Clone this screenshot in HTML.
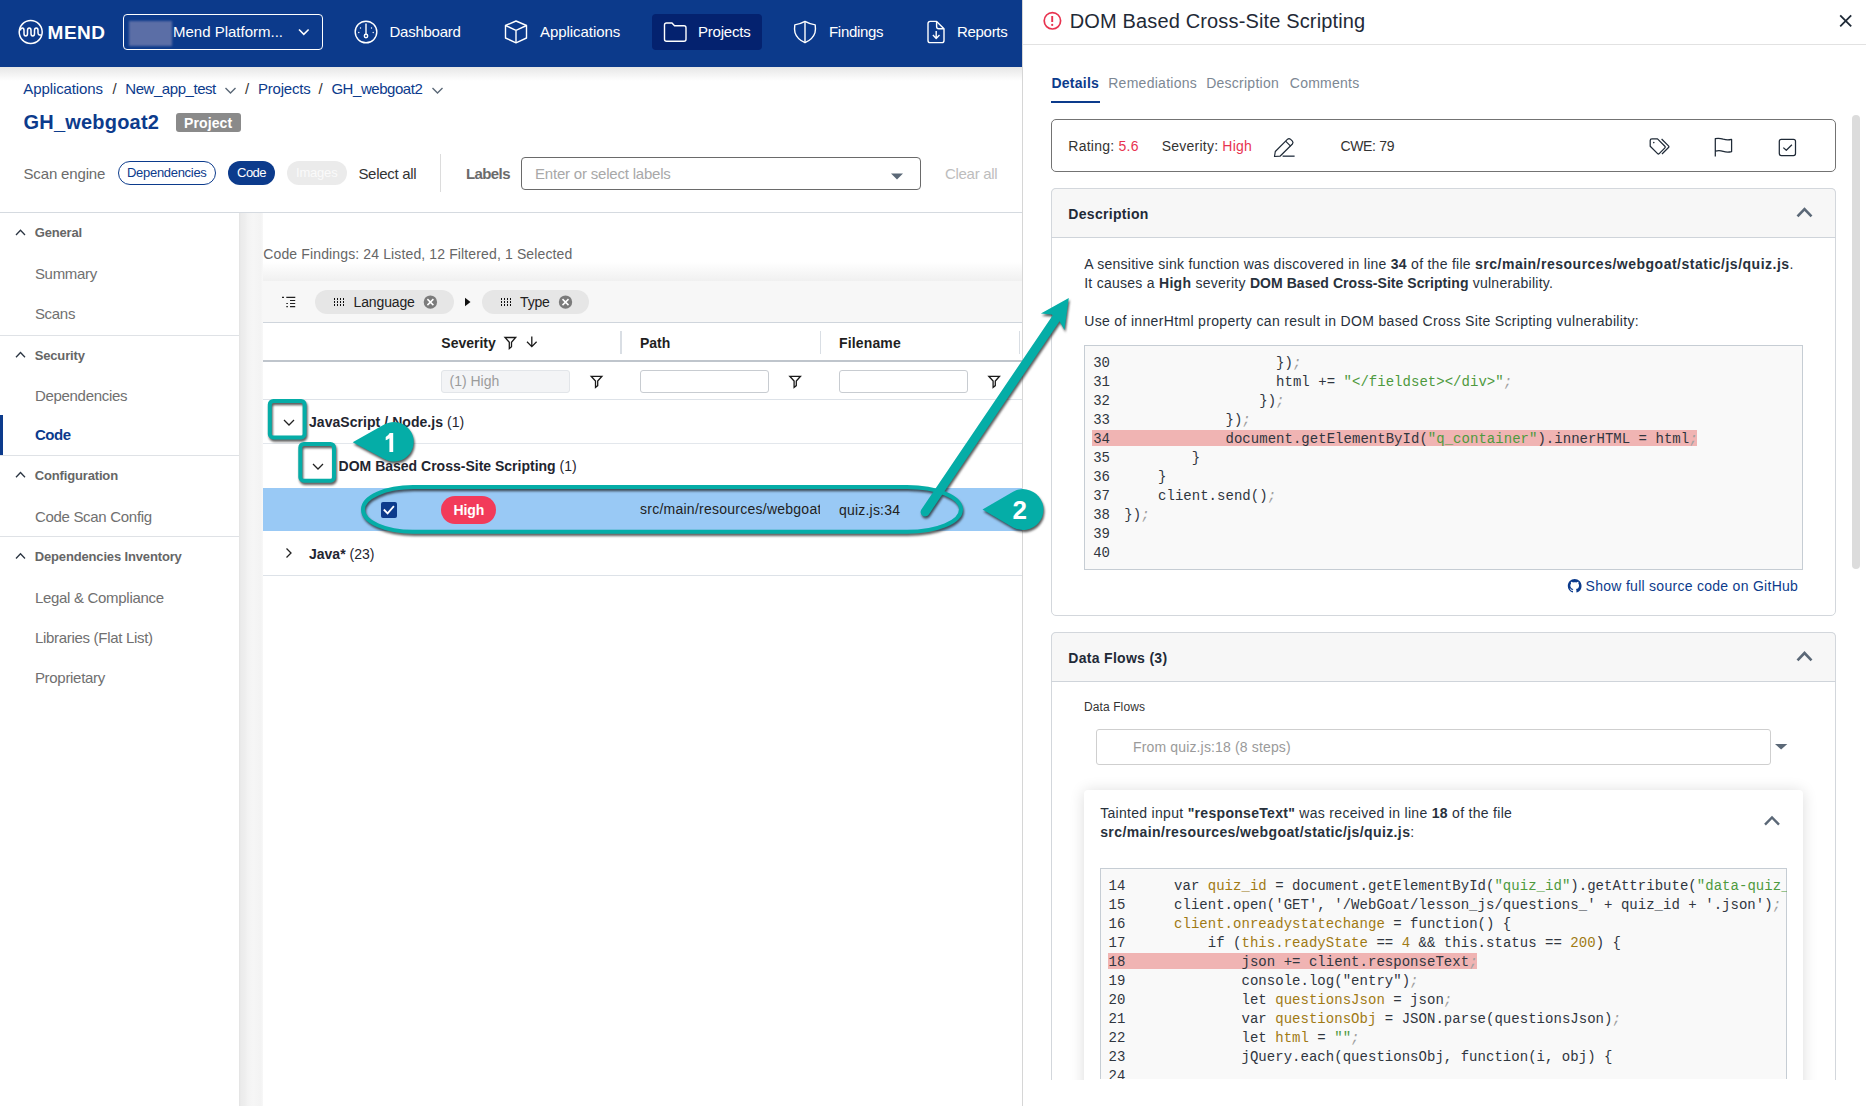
<!DOCTYPE html>
<html><head><meta charset="utf-8">
<style>
*{box-sizing:border-box;margin:0;padding:0}
html,body{width:1866px;height:1106px;overflow:hidden;background:#fff;font-family:"Liberation Sans",sans-serif;color:#333}
.a{position:absolute}
.t{position:absolute;white-space:nowrap;line-height:1}
svg{position:absolute;overflow:visible}
.m{font-family:"Liberation Mono",monospace}
</style></head><body>
<div class="a" style="left:0px;top:0px;width:1022.00px;height:67.00px;background:#0c3a8b"></div>
<div class="a" style="left:0px;top:67px;width:1022.00px;height:14.00px;background:linear-gradient(#e6e6e6,#fff)"></div>
<svg style="left:0;top:0" width="1" height="1" viewBox="0 0 1 1"><g fill="none" stroke="#fff" stroke-width="1.5"><circle cx="30.7" cy="32" r="11.5"/><path d="M20.4 30.5Q20.6 28 22.3 28Q24 28 24 30.5V33.5Q24 36 25.8 36Q27.5 36 27.5 33.5V30.5Q27.5 28 29.3 28Q31 28 31 30.5V33.5Q31 36 32.8 36Q34.5 36 34.5 33.5V30.5Q34.5 28 36.3 28Q38 28 38 30.5V33Q38.3 35.5 41.3 35"/></g></svg>
<div class="t" style="left:47.5px;top:22.52px;font-size:19px;color:#fff;font-weight:bold;letter-spacing:0.55px">MEND</div>
<div class="a" style="left:123px;top:14px;width:200.00px;height:36.00px;border:1.5px solid #fff;border-radius:4px"></div>
<div class="a" style="left:129px;top:21px;width:43.00px;height:25.00px;background:#5b6ea6;filter:blur(1.2px)"></div>
<div class="t" style="left:173px;top:23.50px;font-size:15px;color:#fff;font-weight:normal;">Mend Platform...</div>
<svg style="left:0;top:0" width="1" height="1"><path d="M299 29.5l4.8 4.8 4.8-4.8" fill="none" stroke="#fff" stroke-width="1.6"/></svg>
<svg style="left:0;top:0" width="1" height="1"><g fill="none" stroke="#fff" stroke-width="1.4"><circle cx="366" cy="32" r="10.8"/><path d="M366 23.5v11"/><circle cx="366" cy="36" r="1.7"/></g><g fill="#fff"><circle cx="360.5" cy="28" r=".7"/><circle cx="371.5" cy="28" r=".7"/><circle cx="358.8" cy="32.5" r=".7"/><circle cx="373.2" cy="32.5" r=".7"/></g></svg>
<div class="t" style="left:389.5px;top:23.50px;font-size:15px;color:#fff;font-weight:normal;letter-spacing:-0.25px">Dashboard</div>
<svg style="left:0;top:0" width="1" height="1"><g fill="none" stroke="#fff" stroke-width="1.4" stroke-linejoin="round"><path d="M516 21l10.5 4.5v12.5l-10.5 4.8-10.5-4.8v-12.5z"/><path d="M505.5 25.5l10.5 4.8 10.5-4.8M516 30.3v12.5"/></g></svg>
<div class="t" style="left:540px;top:23.50px;font-size:15px;color:#fff;font-weight:normal;letter-spacing:-0.05px">Applications</div>
<div class="a" style="left:652px;top:14px;width:110.00px;height:36.00px;background:#04226f;border-radius:4px"></div>
<svg style="left:0;top:0" width="1" height="1"><path d="M664.5 25q0-2 2-2h5.5l2.5 2.8h9.5q2 0 2 2v11.5q0 2-2 2h-17.5q-2 0-2-2z" fill="none" stroke="#fff" stroke-width="1.4" stroke-linejoin="round"/></svg>
<div class="t" style="left:698px;top:23.50px;font-size:15px;color:#fff;font-weight:normal;letter-spacing:-0.2px">Projects</div>
<svg style="left:0;top:0" width="1" height="1"><g fill="none" stroke="#fff" stroke-width="1.4" stroke-linejoin="round"><path d="M805 21.4Q810 24.2 815.2 24.9Q815.8 29 815 32.6Q813 39.2 805 42.7Q797 39.2 795 32.6Q794.2 29 794.8 24.9Q800 24.2 805 21.4Z"/><path d="M805 21.4V42.7"/></g></svg>
<div class="t" style="left:829px;top:23.50px;font-size:15px;color:#fff;font-weight:normal;letter-spacing:-0.3px">Findings</div>
<svg style="left:0;top:0" width="1" height="1"><g fill="none" stroke="#fff" stroke-width="1.4" stroke-linejoin="round"><path d="M930.2 21.4H936.6L944 28.8V40.4Q944 42.6 941.8 42.6H930.2Q928 42.6 928 40.4V23.6Q928 21.4 930.2 21.4Z"/><path d="M936.6 21.4V26.6Q936.6 28.8 938.8 28.8H944M936.2 31V38.4M932.9 35.1L936.2 38.4L939.5 35.1"/></g></svg>
<div class="t" style="left:957px;top:23.50px;font-size:15px;color:#fff;font-weight:normal;letter-spacing:-0.3px">Reports</div>
<div class="t" style="left:23.3px;top:81.40px;font-size:15px;color:#0c3b8c;font-weight:normal;letter-spacing:-0.1px">Applications</div>
<div class="t" style="left:112.5px;top:81.40px;font-size:15px;color:#333;font-weight:normal;">/</div>
<div class="t" style="left:125.3px;top:81.40px;font-size:15px;color:#0c3b8c;font-weight:normal;letter-spacing:-0.45px">New_app_test</div>
<svg style="left:0;top:0" width="1" height="1"><path d="M225.5 88l5.0 5 5.0 -5" fill="none" stroke="#5b6877" stroke-width="1.4"/></svg>
<div class="t" style="left:245px;top:81.40px;font-size:15px;color:#333;font-weight:normal;">/</div>
<div class="t" style="left:257.9px;top:81.40px;font-size:15px;color:#0c3b8c;font-weight:normal;letter-spacing:-0.2px">Projects</div>
<div class="t" style="left:318.4px;top:81.40px;font-size:15px;color:#333;font-weight:normal;">/</div>
<div class="t" style="left:331.4px;top:81.40px;font-size:15px;color:#0c3b8c;font-weight:normal;letter-spacing:-0.45px">GH_webgoat2</div>
<svg style="left:0;top:0" width="1" height="1"><path d="M432.5 88l5.0 5 5.0 -5" fill="none" stroke="#5b6877" stroke-width="1.4"/></svg>
<div class="t" style="left:23.5px;top:112.07px;font-size:20px;color:#0c3b8c;font-weight:bold;letter-spacing:0.2px">GH_webgoat2</div>
<div class="a" style="left:176px;top:113px;width:65.00px;height:18.50px;background:#8a8a8a;border-radius:3px"></div>
<div class="t" style="left:184px;top:116.05px;font-size:14px;color:#fff;font-weight:bold;letter-spacing:0.1px">Project</div>
<div class="t" style="left:23.5px;top:166.00px;font-size:15px;color:#6b6b6b;font-weight:normal;letter-spacing:-0.15px">Scan engine</div>
<div class="a" style="left:118px;top:161px;width:98.00px;height:24.00px;border:1.5px solid #0c3b8c;border-radius:12px"></div>
<div class="t" style="left:127px;top:166.30px;font-size:13px;color:#0c3b8c;font-weight:normal;letter-spacing:-0.3px">Dependencies</div>
<div class="a" style="left:228px;top:161px;width:47.00px;height:24.00px;background:#0c3b8c;border-radius:12px"></div>
<div class="t" style="left:237px;top:166.30px;font-size:13px;color:#fff;font-weight:normal;letter-spacing:-0.5px">Code</div>
<div class="a" style="left:287px;top:161px;width:60.00px;height:24.00px;background:#ebebeb;border-radius:12px"></div>
<div class="t" style="left:296px;top:166.30px;font-size:13px;color:#fafafa;font-weight:normal;letter-spacing:-0.2px">Images</div>
<div class="t" style="left:358.4px;top:166.00px;font-size:15px;color:#333;font-weight:normal;letter-spacing:-0.3px">Select all</div>
<div class="a" style="left:440px;top:154px;width:1.00px;height:38.00px;background:#dcdcdc"></div>
<div class="t" style="left:466px;top:166.00px;font-size:15px;color:#6b6b6b;font-weight:bold;letter-spacing:-0.6px">Labels</div>
<div class="a" style="left:521px;top:156.5px;width:400.00px;height:33.00px;border:1.5px solid #6a6a6a;border-radius:4px"></div>
<div class="t" style="left:535px;top:166.00px;font-size:15px;color:#a8a8a8;font-weight:normal;letter-spacing:-0.2px">Enter or select labels</div>
<svg style="left:0;top:0" width="1" height="1"><path d="M891 173.5h12l-6 6z" fill="#5b6877"/></svg>
<div class="t" style="left:945px;top:166.00px;font-size:15px;color:#bdbdbd;font-weight:normal;letter-spacing:-0.3px">Clear all</div>
<div class="a" style="left:0px;top:212px;width:1022.00px;height:1.00px;background:#d5dae0"></div>
<div class="a" style="left:239px;top:213px;width:24.00px;height:893.00px;background:linear-gradient(to right,#e3e3e3 0,#ebebeb 2px,#eeeeee 6px,#f3f3f3 9px,#f6f6f6 14px,#f3f3f3 22px,#f8f8f8 24px)"></div>
<svg style="left:0;top:0" width="1" height="1"><path d="M16 235.0l4.5 -4.7 4.5 4.7" fill="none" stroke="#2b3542" stroke-width="1.3"/></svg>
<div class="t" style="left:34.7px;top:226.30px;font-size:13px;color:#666;font-weight:bold;letter-spacing:-0.15px">General</div>
<div class="t" style="left:34.9px;top:266.20px;font-size:15px;color:#707070;font-weight:normal;letter-spacing:-0.3px">Summary</div>
<div class="t" style="left:34.9px;top:306.30px;font-size:15px;color:#707070;font-weight:normal;letter-spacing:-0.3px">Scans</div>
<div class="a" style="left:0px;top:334.5px;width:239.00px;height:1.00px;background:#dfe2e6"></div>
<svg style="left:0;top:0" width="1" height="1"><path d="M16 357.2l4.5 -4.7 4.5 4.7" fill="none" stroke="#2b3542" stroke-width="1.3"/></svg>
<div class="t" style="left:34.7px;top:348.50px;font-size:13px;color:#666;font-weight:bold;letter-spacing:-0.15px">Security</div>
<div class="t" style="left:34.9px;top:387.50px;font-size:15px;color:#707070;font-weight:normal;letter-spacing:-0.3px">Dependencies</div>
<div class="a" style="left:0px;top:415px;width:3.00px;height:40.00px;background:#0c3b8c"></div>
<div class="t" style="left:34.9px;top:427.20px;font-size:15px;color:#0c3b8c;font-weight:bold;letter-spacing:-0.4px">Code</div>
<div class="a" style="left:0px;top:455px;width:239.00px;height:1.00px;background:#dfe2e6"></div>
<svg style="left:0;top:0" width="1" height="1"><path d="M16 477.2l4.5 -4.7 4.5 4.7" fill="none" stroke="#2b3542" stroke-width="1.3"/></svg>
<div class="t" style="left:34.7px;top:468.50px;font-size:13px;color:#666;font-weight:bold;letter-spacing:-0.15px">Configuration</div>
<div class="t" style="left:34.9px;top:508.70px;font-size:15px;color:#707070;font-weight:normal;letter-spacing:-0.3px">Code Scan Config</div>
<div class="a" style="left:0px;top:536px;width:239.00px;height:1.00px;background:#dfe2e6"></div>
<svg style="left:0;top:0" width="1" height="1"><path d="M16 558.5l4.5 -4.7 4.5 4.7" fill="none" stroke="#2b3542" stroke-width="1.3"/></svg>
<div class="t" style="left:34.7px;top:549.80px;font-size:13px;color:#666;font-weight:bold;letter-spacing:-0.15px">Dependencies Inventory</div>
<div class="t" style="left:34.9px;top:589.70px;font-size:15px;color:#707070;font-weight:normal;letter-spacing:-0.3px">Legal &amp; Compliance</div>
<div class="t" style="left:34.9px;top:629.70px;font-size:15px;color:#707070;font-weight:normal;letter-spacing:-0.3px">Libraries (Flat List)</div>
<div class="t" style="left:34.9px;top:669.70px;font-size:15px;color:#707070;font-weight:normal;letter-spacing:-0.3px">Proprietary</div>
<div class="t" style="left:263.3px;top:246.95px;font-size:14px;color:#666;font-weight:normal;letter-spacing:0.13px">Code Findings: 24 Listed, 12 Filtered, 1 Selected</div>
<div class="a" style="left:263px;top:262px;width:759.00px;height:19.00px;background:linear-gradient(#fff,#f0f0f0)"></div>
<div class="a" style="left:263px;top:281px;width:759.00px;height:41.50px;background:#f7f7f7"></div>
<svg style="left:0;top:0" width="1" height="1"><g stroke="#222" stroke-width="1.1"><path d="M282 297.4h2M286.3 297.4h9M290 300.5h5.2M286.3 303.5h1.6M290 303.5h5.2M286.3 306.6h1.6M290 306.6h5.2"/></g></svg>
<div class="a" style="left:315px;top:290px;width:139.00px;height:24.00px;background:#e6e6e6;border-radius:12px"></div>
<svg style="left:0;top:0" width="1" height="1" shape-rendering="crispEdges"><g fill="#111"><rect x="334" y="298" width="1.1" height="2"/><rect x="334" y="301" width="1.1" height="2"/><rect x="334" y="304" width="1.1" height="2"/><rect x="337" y="298" width="1.1" height="2"/><rect x="337" y="301" width="1.1" height="2"/><rect x="337" y="304" width="1.1" height="2"/><rect x="340" y="298" width="1.1" height="2"/><rect x="340" y="301" width="1.1" height="2"/><rect x="340" y="304" width="1.1" height="2"/><rect x="343" y="298" width="1.1" height="2"/><rect x="343" y="301" width="1.1" height="2"/><rect x="343" y="304" width="1.1" height="2"/></g></svg>
<div class="t" style="left:353.6px;top:295.15px;font-size:14px;color:#222;font-weight:normal;letter-spacing:-0.15px">Language</div>
<svg style="left:0;top:0" width="1" height="1"><circle cx="430.4" cy="302.1" r="6.7" fill="#7b7b7b"/><path d="M427.4 299.1l6 6M433.4 299.1l-6 6" stroke="#fff" stroke-width="1.5"/></svg>
<svg style="left:0;top:0" width="1" height="1"><path d="M465 297.8l5.5 4.2-5.5 4.2z" fill="#111"/></svg>
<div class="a" style="left:482px;top:290px;width:107.00px;height:24.00px;background:#e6e6e6;border-radius:12px"></div>
<svg style="left:0;top:0" width="1" height="1" shape-rendering="crispEdges"><g fill="#111"><rect x="501" y="298" width="1.1" height="2"/><rect x="501" y="301" width="1.1" height="2"/><rect x="501" y="304" width="1.1" height="2"/><rect x="504" y="298" width="1.1" height="2"/><rect x="504" y="301" width="1.1" height="2"/><rect x="504" y="304" width="1.1" height="2"/><rect x="507" y="298" width="1.1" height="2"/><rect x="507" y="301" width="1.1" height="2"/><rect x="507" y="304" width="1.1" height="2"/><rect x="510" y="298" width="1.1" height="2"/><rect x="510" y="301" width="1.1" height="2"/><rect x="510" y="304" width="1.1" height="2"/></g></svg>
<div class="t" style="left:520px;top:295.15px;font-size:14px;color:#222;font-weight:normal;letter-spacing:-0.15px">Type</div>
<svg style="left:0;top:0" width="1" height="1"><circle cx="565.5" cy="302.1" r="6.7" fill="#7b7b7b"/><path d="M562.5 299.1l6 6M568.5 299.1l-6 6" stroke="#fff" stroke-width="1.5"/></svg>
<div class="a" style="left:263px;top:322px;width:759.00px;height:1.30px;background:#cfd5dc"></div>
<div class="t" style="left:441.3px;top:336.05px;font-size:14px;color:#1f1f1f;font-weight:bold;letter-spacing:0px">Severity</div>
<svg style="left:0;top:0" width="1" height="1"><path d="M505 337.5h10.7l-4.2 4.8v4.5l-2.2 1.8v-6.3z" fill="none" stroke="#1a1a1a" stroke-width="1.3" stroke-linejoin="miter"/></svg>
<svg style="left:0;top:0" width="1" height="1"><path d="M531.8 336.5v9.8M527 341.8l4.8 4.8 4.8-4.8" fill="none" stroke="#1a1a1a" stroke-width="1.3"/></svg>
<div class="a" style="left:620px;top:331px;width:1.50px;height:22.50px;background:#d9dee4"></div>
<div class="t" style="left:640px;top:336.05px;font-size:14px;color:#1f1f1f;font-weight:bold;">Path</div>
<div class="a" style="left:819.5px;top:331px;width:1.50px;height:22.50px;background:#d9dee4"></div>
<div class="t" style="left:839px;top:336.05px;font-size:14px;color:#1f1f1f;font-weight:bold;letter-spacing:0.15px">Filename</div>
<div class="a" style="left:1018.5px;top:331px;width:1.50px;height:22.50px;background:#d9dee4"></div>
<div class="a" style="left:263px;top:360px;width:759.00px;height:2.00px;background:#bfc5cc"></div>
<div class="a" style="left:441px;top:369.5px;width:129.00px;height:23.00px;background:#f3f4f6;border:1px solid #e2e5e9;border-radius:3px"></div>
<div class="t" style="left:449.5px;top:374.15px;font-size:14px;color:#9b9b9b;font-weight:normal;letter-spacing:0px">(1) High</div>
<svg style="left:0;top:0" width="1" height="1"><path d="M591.2 376.3h10.7l-4.2 4.8v4.5l-2.2 1.8v-6.3z" fill="none" stroke="#1a1a1a" stroke-width="1.3" stroke-linejoin="miter"/></svg>
<div class="a" style="left:640px;top:369.5px;width:128.50px;height:23.00px;background:#fff;border:1px solid #c8ccd1;border-radius:3px"></div>
<svg style="left:0;top:0" width="1" height="1"><path d="M789.8 376.3h10.7l-4.2 4.8v4.5l-2.2 1.8v-6.3z" fill="none" stroke="#1a1a1a" stroke-width="1.3" stroke-linejoin="miter"/></svg>
<div class="a" style="left:839px;top:369.5px;width:128.50px;height:23.00px;background:#fff;border:1px solid #c8ccd1;border-radius:3px"></div>
<svg style="left:0;top:0" width="1" height="1"><path d="M988.8 376.3h10.7l-4.2 4.8v4.5l-2.2 1.8v-6.3z" fill="none" stroke="#1a1a1a" stroke-width="1.3" stroke-linejoin="miter"/></svg>
<div class="a" style="left:263px;top:399px;width:759.00px;height:1.00px;background:#dde2e8"></div>
<div class="t" style="left:309px;top:415.15px;font-size:14px;color:#1f2530;font-weight:bold;letter-spacing:0.05px">JavaScript / Node.js <span style="font-weight:normal">(1)</span></div>
<svg style="left:0;top:0" width="1" height="1"><path d="M284 420l5.0 5 5.0 -5" fill="none" stroke="#222" stroke-width="1.3"/></svg>
<div class="a" style="left:263px;top:443px;width:759.00px;height:1.00px;background:#e3e7ec"></div>
<div class="t" style="left:338.6px;top:458.55px;font-size:14px;color:#1f2530;font-weight:bold;letter-spacing:0.0px">DOM Based Cross-Site Scripting <span style="font-weight:normal">(1)</span></div>
<svg style="left:0;top:0" width="1" height="1"><path d="M313 464l5.0 5 5.0 -5" fill="none" stroke="#222" stroke-width="1.3"/></svg>
<div class="a" style="left:263px;top:487.8px;width:759.00px;height:43.40px;background:#99c9f5"></div>
<div class="a" style="left:381.3px;top:502px;width:16.00px;height:16.00px;background:#0c3b8c;border-radius:2px"></div>
<svg style="left:0;top:0" width="1" height="1"><path d="M383.8 509.5l3.8 3.9 6.3-7.3" fill="none" stroke="#fff" stroke-width="1.8"/></svg>
<div class="a" style="left:441.3px;top:496px;width:54.50px;height:28.00px;background:#f23b5a;border-radius:14px"></div>
<div class="t" style="left:453.5px;top:502.95px;font-size:14px;color:#fff;font-weight:bold;letter-spacing:-0.1px">High</div>
<div class="a" style="left:640px;top:500px;width:180px;height:20px;overflow:hidden"><div class="t" style="left:0;top:2.15px;font-size:14px;color:#222;letter-spacing:0.25px">src/main/resources/webgoat/static/js</div></div>
<div class="t" style="left:839px;top:502.65px;font-size:14px;color:#222;font-weight:normal;letter-spacing:0.2px">quiz.js:34</div>
<div class="t" style="left:309px;top:547.15px;font-size:14px;color:#1f2530;font-weight:bold;">Java* <span style="font-weight:normal">(23)</span></div>
<svg style="left:0;top:0" width="1" height="1"><path d="M286.5 548.5l4.5 4.5-4.5 4.5" fill="none" stroke="#222" stroke-width="1.3"/></svg>
<div class="a" style="left:263px;top:574.5px;width:759.00px;height:1.00px;background:#dde2e8"></div>
<div class="a" style="left:1022px;top:0px;width:844.00px;height:1106.00px;background:#fff;border-left:1px solid #d6d6d6"></div>
<svg style="left:0;top:0" width="1" height="1"><circle cx="1052.4" cy="20.8" r="8.2" fill="none" stroke="#e8334f" stroke-width="1.7"/><path d="M1052.2 16v6" stroke="#e8334f" stroke-width="1.9"/><circle cx="1052.2" cy="24.9" r="1.1" fill="#e8334f"/></svg>
<div class="t" style="left:1069.7px;top:10.97px;font-size:20px;color:#1f2a37;font-weight:normal;letter-spacing:0.15px">DOM Based Cross-Site Scripting</div>
<svg style="left:0;top:0" width="1" height="1"><path d="M1840.2 15.3l11 11M1851.2 15.3l-11 11" stroke="#1f2a37" stroke-width="1.8"/></svg>
<div class="a" style="left:1023px;top:44px;width:843.00px;height:1.20px;background:#e2e2e2"></div>
<div class="t" style="left:1051.4px;top:76.05px;font-size:14px;color:#0c3b8c;font-weight:bold;letter-spacing:0.25px">Details</div>
<div class="t" style="left:1108.2px;top:76.05px;font-size:14px;color:#7c8793;font-weight:normal;letter-spacing:0.28px">Remediations</div>
<div class="t" style="left:1206.2px;top:76.05px;font-size:14px;color:#7c8793;font-weight:normal;letter-spacing:0.25px">Description</div>
<div class="t" style="left:1289.8px;top:76.05px;font-size:14px;color:#7c8793;font-weight:normal;letter-spacing:0.25px">Comments</div>
<div class="a" style="left:1051px;top:101px;width:49.00px;height:2.00px;background:#0c3b8c"></div>
<div class="a" style="left:1852px;top:115px;width:8.00px;height:454.00px;background:#dcdcdc;border-radius:4px"></div>
<div class="a" style="left:1051px;top:119px;width:785.00px;height:52.70px;border:1.5px solid #737373;border-radius:5px"></div>
<div class="t" style="left:1068.3px;top:139.35px;font-size:14px;color:#333;font-weight:normal;letter-spacing:0.25px">Rating: <span style="color:#e8334f">5.6</span></div>
<div class="t" style="left:1161.8px;top:139.35px;font-size:14px;color:#333;font-weight:normal;letter-spacing:0.22px">Severity: <span style="color:#e8334f">High</span></div>
<svg style="left:0;top:0" width="1" height="1"><g fill="none" stroke="#1f2a37" stroke-width="1.2" stroke-linejoin="round"><path d="M1274.5 156.5L1275.3 151.5L1287.6 139.2Q1289 137.9 1290.4 139.2L1292.4 141.2Q1293.6 142.6 1292.4 144L1280 156.2Z"/><path d="M1285.6 141.2l5 5"/></g><path d="M1282.6 156.2h12" stroke="#4b5563" stroke-width="1.6"/></svg>
<div class="t" style="left:1340.5px;top:139.35px;font-size:14px;color:#333;font-weight:normal;letter-spacing:-0.35px">CWE: 79</div>
<svg style="left:0;top:0" width="1" height="1"><g fill="none" stroke="#1f2a37" stroke-width="1.25" stroke-linejoin="round"><path d="M1650.2 140.6V146.2L1657.6 153.6Q1658.4 154.4 1659.2 153.6L1664.9 147.9Q1665.7 147.1 1664.9 146.3L1657.5 138.9H1651.9Q1650.2 138.9 1650.2 140.6Z"/><path d="M1661.6 139L1668.5 145.9Q1669.3 146.7 1668.5 147.5L1662 154"/><path d="M1715.3 156.6V138.6Q1719.2 137.8 1723.2 139.2Q1727.4 140.5 1731.6 139.4V151.6Q1727.4 152.7 1723.2 151.4Q1719.2 150.1 1715.3 151.2"/><rect x="1779.3" y="139.3" width="16.2" height="16.2" rx="2"/><path d="M1783.3 147.6l3 2.7 5.6-5.6"/></g><circle cx="1653.8" cy="142.6" r=".8" fill="#1f2a37"/></svg>
<div class="a" style="left:1051px;top:188px;width:785.00px;height:428.00px;border:1px solid #d3d7dc;border-radius:5px"></div>
<div class="a" style="left:1051px;top:188px;width:785.00px;height:49.40px;background:#f7f7f7;border:1px solid #d3d7dc;border-bottom:none;border-radius:5px 5px 0 0"></div>
<div class="a" style="left:1051px;top:237.20000000000002px;width:785.00px;height:1.20px;background:#cfd4da"></div>
<div class="t" style="left:1068.3px;top:207.45px;font-size:14px;color:#1f2a37;font-weight:bold;letter-spacing:0.3px">Description</div>
<svg style="left:0;top:0" width="1" height="1"><path d="M1797.5 216.40000000000003l7.0 -7.3 7.0 7.3" fill="none" stroke="#5b6877" stroke-width="2.6"/></svg>
<div class="t" style="left:1084.2px;top:257.05px;font-size:14px;color:#28313c;font-weight:normal;letter-spacing:0.27px">A sensitive sink function was discovered in line <b>34</b> of the file <b style="letter-spacing:0.5px">src/main/resources/webgoat/static/js/quiz.js</b>.</div>
<div class="t" style="left:1084.2px;top:275.75px;font-size:14px;color:#28313c;font-weight:normal;letter-spacing:0.27px">It causes a <b>High</b> severity <b style="letter-spacing:0.05px">DOM Based Cross-Site Scripting</b> vulnerability.</div>
<div class="t" style="left:1084.2px;top:313.85px;font-size:14px;color:#28313c;font-weight:normal;letter-spacing:0.34px">Use of innerHtml property can result in DOM based Cross Site Scripting vulnerability:</div>
<div class="a" style="left:1084px;top:345px;width:719.00px;height:225.00px;background:#f9f9f9;border:1px solid #c6cdd4"></div>
<div class="a" style="left:1092px;top:430.4px;width:605.00px;height:16.10px;background:#f0b4b3"></div>
<div class="t m" style="left:1093.2px;top:356.17px;font-size:14px;color:#30363f;letter-spacing:0.03px">30</div>
<div class="t m" style="left:1124.3px;top:356.17px;font-size:14px;color:#30363f;white-space:pre;letter-spacing:0.03px">                  })<i style="color:#a0a0a0">;</i></div>
<div class="t m" style="left:1093.2px;top:375.17px;font-size:14px;color:#30363f;letter-spacing:0.03px">31</div>
<div class="t m" style="left:1124.3px;top:375.17px;font-size:14px;color:#30363f;white-space:pre;letter-spacing:0.03px">                  html += <span style="color:#4e9a3e">"&lt;/fieldset&gt;&lt;/div&gt;"</span><i style="color:#a0a0a0">;</i></div>
<div class="t m" style="left:1093.2px;top:394.17px;font-size:14px;color:#30363f;letter-spacing:0.03px">32</div>
<div class="t m" style="left:1124.3px;top:394.17px;font-size:14px;color:#30363f;white-space:pre;letter-spacing:0.03px">                })<i style="color:#a0a0a0">;</i></div>
<div class="t m" style="left:1093.2px;top:413.17px;font-size:14px;color:#30363f;letter-spacing:0.03px">33</div>
<div class="t m" style="left:1124.3px;top:413.17px;font-size:14px;color:#30363f;white-space:pre;letter-spacing:0.03px">            })<i style="color:#a0a0a0">;</i></div>
<div class="t m" style="left:1093.2px;top:432.17px;font-size:14px;color:#30363f;letter-spacing:0.03px">34</div>
<div class="t m" style="left:1124.3px;top:432.17px;font-size:14px;color:#30363f;white-space:pre;letter-spacing:0.03px">            document.getElementById(<span style="color:#4e9a3e">"q_container"</span>).innerHTML = html<i style="color:#a0a0a0">;</i></div>
<div class="t m" style="left:1093.2px;top:451.17px;font-size:14px;color:#30363f;letter-spacing:0.03px">35</div>
<div class="t m" style="left:1124.3px;top:451.17px;font-size:14px;color:#30363f;white-space:pre;letter-spacing:0.03px">        }</div>
<div class="t m" style="left:1093.2px;top:470.17px;font-size:14px;color:#30363f;letter-spacing:0.03px">36</div>
<div class="t m" style="left:1124.3px;top:470.17px;font-size:14px;color:#30363f;white-space:pre;letter-spacing:0.03px">    }</div>
<div class="t m" style="left:1093.2px;top:489.17px;font-size:14px;color:#30363f;letter-spacing:0.03px">37</div>
<div class="t m" style="left:1124.3px;top:489.17px;font-size:14px;color:#30363f;white-space:pre;letter-spacing:0.03px">    client.send()<i style="color:#a0a0a0">;</i></div>
<div class="t m" style="left:1093.2px;top:508.17px;font-size:14px;color:#30363f;letter-spacing:0.03px">38</div>
<div class="t m" style="left:1124.3px;top:508.17px;font-size:14px;color:#30363f;white-space:pre;letter-spacing:0.03px">})<i style="color:#a0a0a0">;</i></div>
<div class="t m" style="left:1093.2px;top:527.17px;font-size:14px;color:#30363f;letter-spacing:0.03px">39</div>
<div class="t m" style="left:1093.2px;top:546.17px;font-size:14px;color:#30363f;letter-spacing:0.03px">40</div>
<svg style="left:0;top:0" width="1" height="1"><path fill="#0c3b8c" transform="translate(1567.8 579) scale(0.86)" d="M8 0C3.58 0 0 3.58 0 8c0 3.54 2.29 6.53 5.47 7.59.4.07.55-.17.55-.38 0-.19-.01-.82-.01-1.49-2.01.37-2.53-.49-2.69-.94-.09-.23-.48-.94-.82-1.13-.28-.15-.68-.52-.01-.53.63-.01 1.08.58 1.23.82.72 1.21 1.87.87 2.33.66.07-.52.28-.87.51-1.07-1.78-.2-3.64-.89-3.64-3.95 0-.87.31-1.59.82-2.15-.08-.2-.36-1.02.08-2.12 0 0 .67-.21 2.2.82.64-.18 1.32-.27 2-.27.68 0 1.36.09 2 .27 1.53-1.04 2.2-.82 2.2-.82.44 1.1.16 1.92.08 2.12.51.56.82 1.27.82 2.15 0 3.07-1.87 3.75-3.65 3.95.29.25.54.73.54 1.48 0 1.07-.01 1.93-.01 2.2 0 .21.15.46.55.38A8.013 8.013 0 0016 8c0-4.42-3.58-8-8-8z"/></svg>
<div class="t" style="left:1585.6px;top:579.05px;font-size:14px;color:#0c3b8c;font-weight:normal;letter-spacing:0.28px">Show full source code on GitHub</div>
<div class="a" style="left:1051px;top:632.4px;width:785.00px;height:473.60px;border:1px solid #d3d7dc;border-radius:5px"></div>
<div class="a" style="left:1051px;top:632.4px;width:785.00px;height:48.80px;background:#f7f7f7;border:1px solid #d3d7dc;border-bottom:none;border-radius:5px 5px 0 0"></div>
<div class="a" style="left:1051px;top:681.0px;width:785.00px;height:1.20px;background:#cfd4da"></div>
<div class="t" style="left:1068.3px;top:651.35px;font-size:14px;color:#1f2a37;font-weight:bold;letter-spacing:0.3px">Data Flows (3)</div>
<svg style="left:0;top:0" width="1" height="1"><path d="M1797.5 660.3l7.0 -7.3 7.0 7.3" fill="none" stroke="#5b6877" stroke-width="2.6"/></svg>
<div class="t" style="left:1084px;top:700.54px;font-size:12px;color:#333;font-weight:normal;letter-spacing:0.1px">Data Flows</div>
<div class="a" style="left:1096px;top:728.5px;width:674.50px;height:36.80px;border:1px solid #cfcfcf;border-radius:3px"></div>
<div class="t" style="left:1133px;top:739.95px;font-size:14px;color:#9a9a9a;font-weight:normal;letter-spacing:0.15px">From quiz.js:18 (8 steps)</div>
<svg style="left:0;top:0" width="1" height="1"><path d="M1775 744h12.3l-6.15 5.5z" fill="#5b6877"/></svg>
<div class="a" style="left:1084.3px;top:789.5px;width:718.40px;height:316.50px;background:#fff;box-shadow:0 1px 15px rgba(0,0,0,0.14);border-radius:4px"></div>
<div class="t" style="left:1100.2px;top:806.45px;font-size:14px;color:#28313c;font-weight:normal;letter-spacing:0.3px">Tainted input <b>"responseText"</b> was received in line <b>18</b> of the file</div>
<div class="t" style="left:1100.2px;top:825.15px;font-size:14px;color:#28313c;font-weight:normal;letter-spacing:0.4px"><b>src/main/resources/webgoat/static/js/quiz.js</b>:</div>
<svg style="left:0;top:0" width="1" height="1"><path d="M1765 824.7l7.0 -7.2 7.0 7.2" fill="none" stroke="#5b6877" stroke-width="2.4"/></svg>
<div class="a" style="left:1100px;top:868px;width:687px;height:211.4px;overflow:hidden">
<div class="a" style="left:-1100px;top:-868px;width:1866px;height:1106px">
<div class="a" style="left:1100px;top:868px;width:687.00px;height:312.00px;background:#f9f9f9;border:1px solid #c6cdd4"></div>
<div class="a" style="left:1107.7px;top:953.1px;width:369.30px;height:15.50px;background:#f0b4b3"></div>
<div class="t m" style="left:1108.6px;top:879.07px;font-size:14px;color:#30363f;letter-spacing:0.03px">14</div>
<div class="t m" style="left:1140.3px;top:879.07px;font-size:14px;color:#30363f;white-space:pre;letter-spacing:0.03px">    var <span style="color:#a07a14">quiz_id</span> = document.getElementById(<span style="color:#4e9a3e">"quiz_id"</span>).getAttribute(<span style="color:#4e9a3e">"data-quiz_id"</span>)<i style="color:#a0a0a0">;</i></div>
<div class="t m" style="left:1108.6px;top:898.07px;font-size:14px;color:#30363f;letter-spacing:0.03px">15</div>
<div class="t m" style="left:1140.3px;top:898.07px;font-size:14px;color:#30363f;white-space:pre;letter-spacing:0.03px">    client.open('GET', '/WebGoat/lesson_js/questions_' + quiz_id + '.json')<i style="color:#a0a0a0">;</i></div>
<div class="t m" style="left:1108.6px;top:917.07px;font-size:14px;color:#30363f;letter-spacing:0.03px">16</div>
<div class="t m" style="left:1140.3px;top:917.07px;font-size:14px;color:#30363f;white-space:pre;letter-spacing:0.03px">    <span style="color:#a07a14">client.onreadystatechange</span> = function() {</div>
<div class="t m" style="left:1108.6px;top:936.07px;font-size:14px;color:#30363f;letter-spacing:0.03px">17</div>
<div class="t m" style="left:1140.3px;top:936.07px;font-size:14px;color:#30363f;white-space:pre;letter-spacing:0.03px">        if (<span style="color:#a07a14">this.readyState</span> == <span style="color:#a07a14">4</span> &amp;&amp; this.status == <span style="color:#a07a14">200</span>) {</div>
<div class="t m" style="left:1108.6px;top:955.07px;font-size:14px;color:#30363f;letter-spacing:0.03px">18</div>
<div class="t m" style="left:1140.3px;top:955.07px;font-size:14px;color:#30363f;white-space:pre;letter-spacing:0.03px">            json += client.responseText<i style="color:#a0a0a0">;</i></div>
<div class="t m" style="left:1108.6px;top:974.07px;font-size:14px;color:#30363f;letter-spacing:0.03px">19</div>
<div class="t m" style="left:1140.3px;top:974.07px;font-size:14px;color:#30363f;white-space:pre;letter-spacing:0.03px">            console.log("entry")<i style="color:#a0a0a0">;</i></div>
<div class="t m" style="left:1108.6px;top:993.07px;font-size:14px;color:#30363f;letter-spacing:0.03px">20</div>
<div class="t m" style="left:1140.3px;top:993.07px;font-size:14px;color:#30363f;white-space:pre;letter-spacing:0.03px">            let <span style="color:#a07a14">questionsJson</span> = json<i style="color:#a0a0a0">;</i></div>
<div class="t m" style="left:1108.6px;top:1012.07px;font-size:14px;color:#30363f;letter-spacing:0.03px">21</div>
<div class="t m" style="left:1140.3px;top:1012.07px;font-size:14px;color:#30363f;white-space:pre;letter-spacing:0.03px">            var <span style="color:#a07a14">questionsObj</span> = JSON.parse(questionsJson)<i style="color:#a0a0a0">;</i></div>
<div class="t m" style="left:1108.6px;top:1031.07px;font-size:14px;color:#30363f;letter-spacing:0.03px">22</div>
<div class="t m" style="left:1140.3px;top:1031.07px;font-size:14px;color:#30363f;white-space:pre;letter-spacing:0.03px">            let <span style="color:#a07a14">html</span> = <span style="color:#4e9a3e">""</span><i style="color:#a0a0a0">;</i></div>
<div class="t m" style="left:1108.6px;top:1050.07px;font-size:14px;color:#30363f;letter-spacing:0.03px">23</div>
<div class="t m" style="left:1140.3px;top:1050.07px;font-size:14px;color:#30363f;white-space:pre;letter-spacing:0.03px">            jQuery.each(questionsObj, function(i, obj) {</div>
<div class="t m" style="left:1108.6px;top:1069.07px;font-size:14px;color:#30363f;letter-spacing:0.03px">24</div>
<div class="t m" style="left:1108.6px;top:1088.07px;font-size:14px;color:#30363f;letter-spacing:0.03px">25</div>
</div></div>
<div class="a" style="left:1023px;top:1080px;width:843.00px;height:26.00px;background:#fff"></div>
<svg style="left:0;top:0" width="1866" height="1106" viewBox="0 0 1866 1106">
<defs><filter id="ds" x="-20%" y="-20%" width="140%" height="140%" color-interpolation-filters="sRGB"><feDropShadow dx="1" dy="2.2" stdDeviation="1.3" flood-color="#1a1a1a" flood-opacity="0.72"/></filter></defs>
<g filter="url(#ds)">
<rect x="269.8" y="401" width="34.8" height="36.4" rx="3.5" fill="none" stroke="#05ada7" stroke-width="4"/>
<rect x="300.3" y="444" width="33.7" height="36.7" rx="3.5" fill="none" stroke="#05ada7" stroke-width="4"/>
<path d="M352.7 442.3L384.60 459.28A19.8 19.8 0 1 0 384.18 424.55Z" fill="#05ada7"/>
<path d="M413 487H907A54 22.4 0 0 1 907 531.8H413A50 22.4 0 0 1 413 487Z" fill="none" stroke="#05ada7" stroke-width="4"/>
<path d="M982.5 509.6L1012.62 527.28A20.5 20.5 0 1 0 1012.62 491.92Z" fill="#05ada7"/>
<path d="M925.1 511.9L1056 318.5" stroke="#05ada7" stroke-width="9" stroke-linecap="round"/>
<path d="M1068.8 298L1064.5 330L1058.5 319.5L1051.5 314.5L1040.9 313.5Z" fill="#05ada7"/>
</g>
</svg>
<svg style="left:0;top:0" width="1" height="1"><path d="M389.7 433.1H393.2V452.1H389.4V438.3Q387.8 439.6 385.7 440.2V436.9Q388.2 436 389.7 433.1Z" fill="#fff"/></svg>
<div class="t" style="left:1012.5px;top:497.19px;font-size:26px;color:#fff;font-weight:bold;">2</div>
</body></html>
